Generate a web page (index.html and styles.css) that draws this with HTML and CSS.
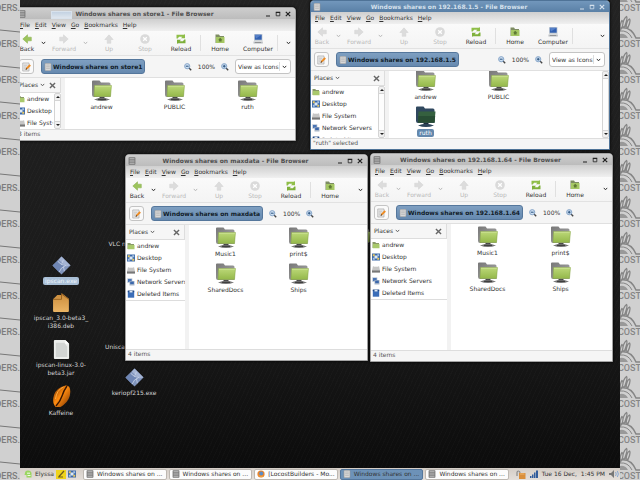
FILE: index.html
```html
<!DOCTYPE html>
<html lang="en">
<head>
<meta charset="utf-8">
<title>Desktop</title>
<link rel="stylesheet" href="styles.css">
</head>
<body>
<svg class="defs" aria-hidden="true">
  <defs>
    <linearGradient id="g-green" x1="0" y1="0" x2="0" y2="1"><stop offset="0" stop-color="#bcd878"/><stop offset="1" stop-color="#94b84a"/></linearGradient>
    <linearGradient id="g-gray" x1="0" y1="0" x2="1" y2="1"><stop offset="0" stop-color="#777"/><stop offset="1" stop-color="#aaa"/></linearGradient>
    <linearGradient id="g-bean" x1="0" y1="0" x2="1" y2="1"><stop offset="0" stop-color="#6a2800"/><stop offset=".45" stop-color="#ff8c10"/><stop offset="1" stop-color="#702c00"/></linearGradient>
    <linearGradient id="g-box" x1="0" y1="0" x2="0" y2="1"><stop offset="0" stop-color="#c88a3a"/><stop offset="1" stop-color="#eab464"/></linearGradient>
  </defs>
  <symbol id="share" viewBox="0 0 20 21"><path d="M0 1.500Q0 .5 1 .5h6.500l1.500 2h8q1.500 0 1.500 1.500v13H2q-2 0-2-2z" fill="url(#g-gray)"/><path d="M2.500 5.500H19.500L18.500 16.500H2z" fill="url(#g-green)" stroke="#86a544" stroke-width=".5"/><path d="M3 6.200h15.800" stroke="#d4e8a0" stroke-width=".7"/><path d="M7.500 17h5v1.500h-5z" fill="#444"/><path d="M2 19.500Q6 17.800 10 17.800t8 1.700Q14 21 10 21T2 19.500z" fill="#777"/><path d="M6 19.300h8" stroke="#333"/></symbol>
  <symbol id="share-dark" viewBox="0 0 20 21"><path d="M0 1.500Q0 .5 1 .5h6.500l1.500 2h8q1.500 0 1.500 1.500v13H2q-2 0-2-2z" fill="#30485f"/><path d="M2.500 5.500H19.500L18.500 16.500H2z" fill="#35603f"/><path d="M2.400 10h16.800l-.7 6.500H2z" fill="#284d34"/><path d="M7.500 17h5v1.500h-5z" fill="#182838"/><path d="M2 19.500Q6 17.800 10 17.800t8 1.700Q14 21 10 21T2 19.500z" fill="#2c445a"/></symbol>
  <symbol id="back" viewBox="0 0 10 10"><path d="M.8 5 5.500.8v2.400h3.800v3.600H5.500v2.400z" fill="#9cc45c" stroke="#8fb456" stroke-width=".6"/></symbol>
  <symbol id="arrow-off" viewBox="0 0 10 10"><path d="M.8 5 5.500.8v2.400h3.800v3.600H5.500v2.400z" fill="#dcdcdc" stroke="#d2d2d2" stroke-width=".5"/></symbol>
  <symbol id="stop" viewBox="0 0 10 10"><circle cx="5" cy="5" r="4.800" fill="#dadada"/><path d="m3.200 3.200 3.600 3.600m0-3.600L3.200 6.800" stroke="#fff" stroke-width="1.300"/></symbol>
  <symbol id="reload" viewBox="0 0 10 10"><path d="M.5.800h7l1.500-.6v4H5l1.300-1.400H3L1.800 4.500H.5z" fill="#8fbe48"/><path d="M9.500 9.200h-7l-1.500.6v-4h4L3.700 7.200H7l1.200-1.700h1.300z" fill="#7eb03a"/></symbol>
  <symbol id="home" viewBox="0 0 10 10"><path d="M.5.500h3.500l1 1.500H9v7H.5z" fill="#7d8c62"/><path d="M1 3h8.500v6H1z" fill="#a5c764"/><path d="m5.200 3.800-2 2h.7v1.700h2.700V5.800h.7z" fill="#5f7a35"/></symbol>
  <symbol id="computer" viewBox="0 0 10 10"><path d="M1 0h8.500v7H1z" fill="#ccd2d8"/><path d="M1.800.8h6.900v5H1.800z" fill="#3260b0"/><path d="M1.800.8h6.900L3 4.500z" fill="#5680c8"/><path d="M.5 7.500h9.300V9.500H.5z" fill="#b8bcc0"/><path d="M2 8.500h6" stroke="#777" stroke-width=".6"/></symbol>
  <symbol id="edit" viewBox="0 0 10 10"><path d="M.8.5h7v9h-7z" fill="#e8e8e8" stroke="#999" stroke-width=".6"/><path d="M2 3h4M2 5h3M2 7h2" stroke="#aaa" stroke-width=".6"/><path d="m4 8 .6-2.300L8.400 2l1.500 1.500-3.800 3.800z" fill="#ee8b22"/><path d="m4 8 .5-1.800 1.300 1.200z" fill="#333"/></symbol>
  <symbol id="drive" viewBox="0 0 8 8"><rect x="1" y=".3" width="6" height="7.400" rx=".8" fill="#d8d8d8" stroke="#999" stroke-width=".6"/><path d="M2.200 2h3.600M2.200 3.700h3.600M2.200 5.400h3.600" stroke="#aaa" stroke-width=".6"/></symbol>
  <symbol id="cabinet" viewBox="0 0 8 8"><rect x=".6" y=".3" width="6.800" height="7.400" rx=".6" fill="#777"/><path d="M1.500 1.800h5M1.500 4h5M1.500 6.200h5" stroke="#c4c4c4" stroke-width="1"/></symbol>
  <symbol id="zoom-out" viewBox="0 0 8 8"><path d="m4.800 4.800 2.400 2.400" stroke="#444" stroke-width="1.400"/><circle cx="3.200" cy="3.200" r="2.600" fill="#cfe0f2" stroke="#7f9fc4" stroke-width=".9"/><path d="M1.800 3.200h2.800" stroke="#26507e"/></symbol>
  <symbol id="zoom-in" viewBox="0 0 8 8"><path d="m4.800 4.800 2.400 2.400" stroke="#444" stroke-width="1.400"/><circle cx="3.200" cy="3.200" r="2.600" fill="#cfe0f2" stroke="#7f9fc4" stroke-width=".9"/><path d="M1.800 3.200h2.800M3.200 1.800v2.800" stroke="#26507e"/></symbol>
  <symbol id="folder" viewBox="0 0 8 8"><path d="M.5 1h2.800l.7 1H7v5H.5z" fill="#8a9a68"/><path d="M1 3h6.500v4.200H.8z" fill="#a9c96c"/></symbol>
  <symbol id="desk" viewBox="0 0 8 8"><path d="M0 .5h8v7H0z" fill="#3a68a8"/><path d="M.8 1.200h2v2h-2zM5.200 4.800h2v2h-2z" fill="#e8c860"/><path d="M5.200 1.200h2v2h-2zM.8 4.800h2v2h-2z" fill="#a8c4e4"/><path d="m4 2 2 2-2 2-2-2z" fill="#dce8f4"/></symbol>
  <symbol id="disk" viewBox="0 0 8 8"><path d="M1 1h6l1 4.500v2H0v-2z" fill="#c6c6c6"/><path d="M0 5.500h8v2H0z" fill="#777"/><path d="M1.500 1.500h5" stroke="#eee"/></symbol>
  <symbol id="net" viewBox="0 0 8 8"><path d="M.3.300h5v4.500h-5z" fill="#b8c4d4"/><path d="M1 1h3.600v3H1z" fill="#4a74b4"/><path d="M2.500 3h5v4.500h-5z" fill="#a8b6c8"/><path d="M3.200 3.600h3.600v2.500H3.200z" fill="#3c68ac"/></symbol>
  <symbol id="bin" viewBox="0 0 8 8"><path d="M.8 1h6.400v6.700H.8z" fill="#3a6db8"/><path d="M.8.5h6.400v1.700H.8z" fill="#234a86"/><path d="M2.500.8h3v1.700h-3z" fill="#dde8f4"/></symbol>
  <symbol id="chev" viewBox="0 0 5 4"><path d="m.8.900 1.700 1.900L4.200.9" fill="none" stroke="currentColor" stroke-width="1"/></symbol>
  <symbol id="x" viewBox="0 0 6 6"><path d="m.8.8 4.400 4.400m0-4.400L.8 5.200" stroke="currentColor" stroke-width="1.200"/></symbol>
  <symbol id="min" viewBox="0 0 6 6"><path d="M1 5h4" stroke="currentColor" stroke-width="1.200"/></symbol>
  <symbol id="max" viewBox="0 0 6 6"><path d="M1.200 1.500h3.600v3.300H1.200z" fill="none" stroke="currentColor" stroke-width=".8"/><path d="M.8 1.300h4.400" stroke="currentColor" stroke-width="1.200"/></symbol>
  <symbol id="diamond" viewBox="0 0 20 20"><path d="m10 .5 9.500 9.500-9.500 9.500L.5 10z" fill="#8094bc"/><path d="m10 .5 9.500 9.500-4.500 1L7 4z" fill="#a4b4d4"/><path d="M5.500 5.500q3 4 8.500 4.500-6 2-6.500 7L.5 10z" fill="#6f86b4"/><path d="M6 5.500q3.500 4.500 8.500 4.500-5.500 2-7 7M12 4l-2 5M13 16l-1-5" fill="none" stroke="#c4d0e6" stroke-width=".9"/></symbol>
  <symbol id="deb" viewBox="0 0 18 18"><path d="M1 6 5 2h4V0l7 5.500V17q0 1-1 1H2q-1 0-1-1z" fill="url(#g-box)"/><path d="M1 6h8V1l7 5" fill="none" stroke="#8f5b1c" stroke-width=".8"/></symbol>
  <symbol id="jar" viewBox="0 0 18 20"><path d="M1 1q0-1 1-1h11l4 4v15q0 1-1 1H2q-1 0-1-1z" fill="#eceeec"/><path d="M3 3h9l3 4v11H3z" fill="#d2d5d3"/><path d="m13 0 4 4h-4z" fill="#fff"/></symbol>
  <symbol id="bean" viewBox="0 0 18 22"><path d="M13 .5Q18 0 17.800 7 17.500 15 11 20T2 20.500Q-.5 17 1.500 10T13 .5z" fill="url(#g-bean)"/><path d="M14.500 1Q11 6 9.500 11T3.500 21" fill="none" stroke="#3a1600" stroke-width="1.400"/><path d="M11 2Q4 5 3 14" fill="none" stroke="#ffac40"/></symbol>
  <symbol id="plants" viewBox="0 0 20 36"><g fill="none" stroke="#858585"><path d="M0 16.500Q0 9 2 6.500q2 1 0 7zM2.500 13Q3 5 6.500 2.500 8 4 4.500 13zM6 13Q7 6 9.500 5 11 7 8 13.500z" stroke-width="1.300"/><path d="M0 14q11-2 16 10h4" stroke-width="1.500"/><path d="M0 17q8-1 12 7" /></g><path d="M0 20q5-1 8 4H0z" fill="#999"/></symbol>
  <symbol id="rule" viewBox="0 0 20 36"><path d="m0 30 20 2" stroke="#777" stroke-width="1"/></symbol>
</svg>

<div class="strip strip-left">
  <div class="tile"><svg><use href="#rule"/></svg><span>DERS.</span></div><div class="tile"><svg><use href="#rule"/></svg><span>DERS.</span></div><div class="tile"><svg><use href="#rule"/></svg><span>DERS.</span></div><div class="tile"><svg><use href="#rule"/></svg><span>DERS.</span></div><div class="tile"><svg><use href="#rule"/></svg><span>DERS.</span></div><div class="tile"><svg><use href="#rule"/></svg><span>DERS.</span></div><div class="tile"><svg><use href="#rule"/></svg><span>DERS.</span></div><div class="tile"><svg><use href="#rule"/></svg><span>DERS.</span></div><div class="tile"><svg><use href="#rule"/></svg><span>DERS.</span></div><div class="tile"><svg><use href="#rule"/></svg><span>DERS.</span></div><div class="tile"><svg><use href="#rule"/></svg><span>DERS.</span></div><div class="tile"><svg><use href="#rule"/></svg><span>DERS.</span></div><div class="tile"><svg><use href="#rule"/></svg><span>DERS.</span></div><div class="tile"><svg><use href="#rule"/></svg><span>DERS.</span></div>
</div>

<main class="screen">
  <div class="desktop">
    <div class="launcher ipscan selected"><svg class="i-launch"><use href="#diamond"/></svg><span>ipscan.exe</span></div>
    <div class="launcher deb"><svg class="i-launch"><use href="#deb"/></svg><span>ipscan_3.0-beta3_<br>i386.deb</span></div>
    <div class="launcher jar"><svg class="i-launch"><use href="#jar"/></svg><span>ipscan-linux-3.0-<br>beta3.jar</span></div>
    <div class="launcher kaffeine"><svg class="i-launch tall"><use href="#bean"/></svg><span>Kaffeine</span></div>
    <div class="launcher keriopf"><svg class="i-launch"><use href="#diamond"/></svg><span>keriopf215.exe</span></div>
    <div class="launcher vlc"><span>VLC media player</span></div>
    <div class="launcher uniscan"><span>Uniscan</span></div>
    <div class="launcher behind"><svg class="i-launch"><use href="#share"/></svg></div>

    <section class="window w-store">
      <header class="titlebar"><svg class="i8"><use href="#cabinet"/></svg><h2>Windows shares on store1 - File Browser</h2><button aria-label="Minimize"><svg><use href="#min"/></svg></button><button aria-label="Maximize"><svg><use href="#max"/></svg></button><button aria-label="Close"><svg><use href="#x"/></svg></button><i class="ghost"></i></header>
      <nav class="menubar"><button><u>F</u>ile</button><button><u>E</u>dit</button><button><u>V</u>iew</button><button><u>G</u>o</button><button><u>B</u>ookmarks</button><button><u>H</u>elp</button></nav>
      <div class="toolbar">
        <button class="t-back"><svg><use href="#back"/></svg>Back</button><button class="t-drop" aria-label="Back history"><svg><use href="#chev"/></svg></button>
        <button class="t-fwd" disabled><svg class="flip"><use href="#arrow-off"/></svg>Forward</button><button class="t-drop" disabled aria-label="Forward history"><svg><use href="#chev"/></svg></button>
        <button class="t-std" disabled><svg class="up"><use href="#arrow-off"/></svg>Up</button><button class="t-stop" disabled><svg><use href="#stop"/></svg>Stop</button><button class="t-std"><svg><use href="#reload"/></svg>Reload</button><i class="sep"></i>
        <button class="t-std"><svg><use href="#home"/></svg>Home</button><button class="t-std"><svg><use href="#computer"/></svg>Computer</button><i class="sep"></i><button class="t-drop more" aria-label="More"><svg><use href="#chev"/></svg></button>
      </div>
      <div class="location">
        <button class="edit" aria-label="Edit location"><svg><use href="#edit"/></svg></button><button class="path"><svg class="i8"><use href="#drive"/></svg>Windows shares on store1</button>
        <div class="zoom wide"><button aria-label="Zoom out"><svg class="i8"><use href="#zoom-out"/></svg></button><span>100%</span><button aria-label="Zoom in"><svg class="i8"><use href="#zoom-in"/></svg></button></div>
        <div class="view"><select aria-label="View"><option>View as Icons</option></select><svg><use href="#chev"/></svg></div>
      </div>
      <div class="body">
        <aside class="side">
          <div class="side-head"><button>Places <svg class="c5"><use href="#chev"/></svg></button><button class="close" aria-label="Close side pane"><svg><use href="#x"/></svg></button></div>
          <div class="side-scroll"><ul><li><a href="#"><svg class="i8"><use href="#folder"/></svg>andrew</a></li><li><a href="#"><svg class="i8"><use href="#desk"/></svg>Desktop</a></li><li><a href="#"><svg class="i8"><use href="#disk"/></svg>File Syst·</a></li></ul><div class="bar"><b class="tri up-tri"></b><b class="thumb"></b><b class="tri"></b></div></div>
        </aside>
        <div class="files"><div class="file"><svg><use href="#share"/></svg><span>andrew</span></div><div class="file"><svg><use href="#share"/></svg><span>PUBLIC</span></div><div class="file"><svg><use href="#share"/></svg><span>ruth</span></div></div>
      </div>
      <footer class="status">3 items</footer>
    </section>

    <section class="window w-five active">
      <header class="titlebar"><svg class="i8"><use href="#drive"/></svg><h2>Windows shares on 192.168.1.5 - File Browser</h2><button aria-label="Minimize"><svg><use href="#min"/></svg></button><button aria-label="Maximize"><svg><use href="#max"/></svg></button><button aria-label="Close"><svg><use href="#x"/></svg></button></header>
      <nav class="menubar"><button><u>F</u>ile</button><button><u>E</u>dit</button><button><u>V</u>iew</button><button><u>G</u>o</button><button><u>B</u>ookmarks</button><button><u>H</u>elp</button></nav>
      <div class="toolbar">
        <button class="t-back" disabled><svg><use href="#arrow-off"/></svg>Back</button><button class="t-drop" disabled aria-label="Back history"><svg><use href="#chev"/></svg></button>
        <button class="t-fwd" disabled><svg class="flip"><use href="#arrow-off"/></svg>Forward</button><button class="t-drop" disabled aria-label="Forward history"><svg><use href="#chev"/></svg></button>
        <button class="t-std" disabled><svg class="up"><use href="#arrow-off"/></svg>Up</button><button class="t-stop" disabled><svg><use href="#stop"/></svg>Stop</button><button class="t-std"><svg><use href="#reload"/></svg>Reload</button><i class="sep"></i>
        <button class="t-std"><svg><use href="#home"/></svg>Home</button><button class="t-std"><svg><use href="#computer"/></svg>Computer</button><i class="sep"></i><button class="t-drop more" aria-label="More"><svg><use href="#chev"/></svg></button>
      </div>
      <div class="location">
        <button class="edit" aria-label="Edit location"><svg><use href="#edit"/></svg></button><button class="path"><svg class="i8"><use href="#drive"/></svg>Windows shares on 192.168.1.5</button>
        <div class="zoom wide"><button aria-label="Zoom out"><svg class="i8"><use href="#zoom-out"/></svg></button><span>100%</span><button aria-label="Zoom in"><svg class="i8"><use href="#zoom-in"/></svg></button></div>
        <div class="view"><select aria-label="View"><option>View as Icons</option></select><svg><use href="#chev"/></svg></div>
      </div>
      <div class="body">
        <aside class="side">
          <div class="side-head"><button>Places <svg class="c5"><use href="#chev"/></svg></button><button class="close" aria-label="Close side pane"><svg><use href="#x"/></svg></button></div>
          <div class="side-scroll"><ul><li><a href="#"><svg class="i8"><use href="#folder"/></svg>andrew</a></li><li><a href="#"><svg class="i8"><use href="#desk"/></svg>Desktop</a></li><li><a href="#"><svg class="i8"><use href="#disk"/></svg>File System</a></li><li><a href="#"><svg class="i8"><use href="#net"/></svg>Network Servers</a></li><li><a href="#"><svg class="i8"><use href="#bin"/></svg>Deleted Items</a></li></ul><div class="bar"><b class="tri up-tri"></b><b class="thumb"></b><b class="tri"></b></div></div>
        </aside>
        <div class="files scrolled"><div class="file"><svg><use href="#share"/></svg><span>andrew</span></div><div class="file"><svg><use href="#share"/></svg><span>PUBLIC</span></div><div class="file picked"><svg><use href="#share-dark"/></svg><span>ruth</span></div></div>
        <div class="bar"><b class="tri up-tri"></b><b class="thumb"></b><b class="tri"></b></div>
      </div>
      <footer class="status">"ruth" selected</footer>
    </section>

    <section class="window w-maxdata">
      <header class="titlebar"><svg class="i8"><use href="#cabinet"/></svg><h2>Windows shares on maxdata - File Browser</h2><button aria-label="Minimize"><svg><use href="#min"/></svg></button><button aria-label="Maximize"><svg><use href="#max"/></svg></button><button aria-label="Close"><svg><use href="#x"/></svg></button></header>
      <nav class="menubar"><button><u>F</u>ile</button><button><u>E</u>dit</button><button><u>V</u>iew</button><button><u>G</u>o</button><button><u>B</u>ookmarks</button><button><u>H</u>elp</button></nav>
      <div class="toolbar">
        <button class="t-back"><svg><use href="#back"/></svg>Back</button><button class="t-drop" aria-label="Back history"><svg><use href="#chev"/></svg></button>
        <button class="t-fwd" disabled><svg class="flip"><use href="#arrow-off"/></svg>Forward</button><button class="t-drop" disabled aria-label="Forward history"><svg><use href="#chev"/></svg></button>
        <button class="t-std" disabled><svg class="up"><use href="#arrow-off"/></svg>Up</button><button class="t-stop" disabled><svg><use href="#stop"/></svg>Stop</button><button class="t-std"><svg><use href="#reload"/></svg>Reload</button><i class="sep"></i>
        <button class="t-std"><svg><use href="#home"/></svg>Home</button><button class="t-drop more" aria-label="More"><svg><use href="#chev"/></svg></button>
      </div>
      <div class="location">
        <button class="edit" aria-label="Edit location"><svg><use href="#edit"/></svg></button><button class="path"><svg class="i8"><use href="#drive"/></svg>Windows shares on maxdata</button>
        <div class="zoom"><button aria-label="Zoom out"><svg class="i8"><use href="#zoom-out"/></svg></button><span>100%</span><button aria-label="Zoom in"><svg class="i8"><use href="#zoom-in"/></svg></button></div>
      </div>
      <div class="body">
        <aside class="side">
          <div class="side-head"><button>Places <svg class="c5"><use href="#chev"/></svg></button><button class="close" aria-label="Close side pane"><svg><use href="#x"/></svg></button></div>
          <div class="side-scroll full"><ul><li><a href="#"><svg class="i8"><use href="#folder"/></svg>andrew</a></li><li><a href="#"><svg class="i8"><use href="#desk"/></svg>Desktop</a></li><li><a href="#"><svg class="i8"><use href="#disk"/></svg>File System</a></li><li><a href="#"><svg class="i8"><use href="#net"/></svg>Network Servers</a></li><li><a href="#"><svg class="i8"><use href="#bin"/></svg>Deleted Items</a></li></ul></div>
        </aside>
        <div class="files"><div class="file"><svg><use href="#share"/></svg><span>Music1</span></div><div class="file"><svg><use href="#share"/></svg><span>print$</span></div><div class="file"><svg><use href="#share"/></svg><span>SharedDocs</span></div><div class="file"><svg><use href="#share"/></svg><span>Ships</span></div></div>
      </div>
      <footer class="status">4 items</footer>
    </section>

    <section class="window w-sixtyfour">
      <header class="titlebar"><svg class="i8"><use href="#cabinet"/></svg><h2>Windows shares on 192.168.1.64 - File Browser</h2><button aria-label="Minimize"><svg><use href="#min"/></svg></button><button aria-label="Maximize"><svg><use href="#max"/></svg></button><button aria-label="Close"><svg><use href="#x"/></svg></button></header>
      <nav class="menubar"><button><u>F</u>ile</button><button><u>E</u>dit</button><button><u>V</u>iew</button><button><u>G</u>o</button><button><u>B</u>ookmarks</button><button><u>H</u>elp</button></nav>
      <div class="toolbar">
        <button class="t-back" disabled><svg><use href="#arrow-off"/></svg>Back</button><button class="t-drop" disabled aria-label="Back history"><svg><use href="#chev"/></svg></button>
        <button class="t-fwd" disabled><svg class="flip"><use href="#arrow-off"/></svg>Forward</button><button class="t-drop" disabled aria-label="Forward history"><svg><use href="#chev"/></svg></button>
        <button class="t-std" disabled><svg class="up"><use href="#arrow-off"/></svg>Up</button><button class="t-stop" disabled><svg><use href="#stop"/></svg>Stop</button><button class="t-std"><svg><use href="#reload"/></svg>Reload</button><i class="sep"></i>
        <button class="t-std"><svg><use href="#home"/></svg>Home</button><button class="t-drop more" aria-label="More"><svg><use href="#chev"/></svg></button>
      </div>
      <div class="location">
        <button class="edit" aria-label="Edit location"><svg><use href="#edit"/></svg></button><button class="path"><svg class="i8"><use href="#drive"/></svg>Windows shares on 192.168.1.64</button>
        <div class="zoom"><button aria-label="Zoom out"><svg class="i8"><use href="#zoom-out"/></svg></button><span>100%</span><button aria-label="Zoom in"><svg class="i8"><use href="#zoom-in"/></svg></button></div>
      </div>
      <div class="body">
        <aside class="side">
          <div class="side-head"><button>Places <svg class="c5"><use href="#chev"/></svg></button><button class="close" aria-label="Close side pane"><svg><use href="#x"/></svg></button></div>
          <div class="side-scroll full"><ul><li><a href="#"><svg class="i8"><use href="#folder"/></svg>andrew</a></li><li><a href="#"><svg class="i8"><use href="#desk"/></svg>Desktop</a></li><li><a href="#"><svg class="i8"><use href="#disk"/></svg>File System</a></li><li><a href="#"><svg class="i8"><use href="#net"/></svg>Network Servers</a></li><li><a href="#"><svg class="i8"><use href="#bin"/></svg>Deleted Items</a></li></ul></div>
        </aside>
        <div class="files"><div class="file"><svg><use href="#share"/></svg><span>Music1</span></div><div class="file"><svg><use href="#share"/></svg><span>print$</span></div><div class="file"><svg><use href="#share"/></svg><span>SharedDocs</span></div><div class="file"><svg><use href="#share"/></svg><span>Ships</span></div></div>
      </div>
      <footer class="status">4 items</footer>
    </section>
  </div>

  <footer class="taskbar">
    <div class="start">
      <button class="user"><svg class="i8" viewBox="0 0 8 8"><path d="M1 3q0-2.500 3-2.500T7.500 3v4.500H2.500V5H.5z" fill="#9bd660"/><path d="M3 3.200h3M3.500 5.500h3" stroke="#f4fbe8"/></svg>Elyssa</button>
      <svg class="note" viewBox="0 0 10 9"><path d="M0 0h10v9H0z" fill="#efd31c"/><path d="m3 6.500 5-5.500M2 7h5" stroke="#6c5c20" stroke-width="1.200"/></svg>
      <svg class="i8"><use href="#desk"/></svg>
    </div>
    <nav class="tasks">
      <button><svg class="i8"><use href="#cabinet"/></svg>Windows shares on ...</button>
      <button><svg class="i8"><use href="#cabinet"/></svg>Windows shares on ...</button>
      <button><svg class="i8" viewBox="0 0 8 8"><circle cx="4" cy="4" r="3.600" fill="#e8842c"/><circle cx="4.200" cy="3.400" r="2" fill="#5a8cc8"/><path d="M.5 4q2 2.500 5 1.500L7 6Q3 9 .5 4z" fill="#f0a040"/></svg>[LocostBuilders - Mo...</button>
      <button class="current"><svg class="i8"><use href="#drive"/></svg>Windows shares on ...</button>
      <button><svg class="i8"><use href="#cabinet"/></svg>Windows shares on ...</button>
    </nav>
    <div class="tray">
      <svg class="lock" viewBox="0 0 10 9"><path d="M3 3h6.500v6H3z" fill="#d98f3c"/><path d="M1 6V2.500Q1 1 2.500 1T4 3" fill="none" stroke="#888" stroke-width="1.200"/><path d="M4 4h4.500" stroke="#efb468"/></svg>
      <svg class="i8" viewBox="0 0 8 8"><path d="M0 6h1.500v2H0zM2 4.500h1.500V8H2zM4 2.500h1.500V8H4zM6 .5h2V8H6z" fill="#315c9c"/></svg>
      <time>Tue 16 Dec,&nbsp; 1:45 PM</time>
      <svg class="speaker" viewBox="0 0 11 8"><path d="M0 3h2l3-3v8L2 5H0z" fill="#777"/><path d="M6.500 2q1.500 2 0 4M8.300 1q2.200 3 0 6" fill="none" stroke="#7fa4d4" stroke-width=".9"/></svg>
    </div>
  </footer>
</main>

<div class="strip strip-right">
  <div class="tile"><svg><use href="#plants"/></svg><span>COST</span></div><div class="tile"><svg><use href="#plants"/></svg><span>COST</span></div><div class="tile"><svg><use href="#plants"/></svg><span>COST</span></div><div class="tile"><svg><use href="#plants"/></svg><span>COST</span></div><div class="tile"><svg><use href="#plants"/></svg><span>COST</span></div><div class="tile"><svg><use href="#plants"/></svg><span>COST</span></div><div class="tile"><svg><use href="#plants"/></svg><span>COST</span></div><div class="tile"><svg><use href="#plants"/></svg><span>COST</span></div><div class="tile"><svg><use href="#plants"/></svg><span>COST</span></div><div class="tile"><svg><use href="#plants"/></svg><span>COST</span></div><div class="tile"><svg><use href="#plants"/></svg><span>COST</span></div><div class="tile"><svg><use href="#plants"/></svg><span>COST</span></div><div class="tile"><svg><use href="#plants"/></svg><span>COST</span></div><div class="tile"><svg><use href="#plants"/></svg><span>COST</span></div>
</div>
</body>
</html>
```
FILE: styles.css
```css
* { box-sizing: border-box; }

body {
  margin: 0;
  height: 100vh;
  display: flex;
  overflow: hidden;
  font: 6px/8px "DejaVu Sans", sans-serif;
  color: #333;
}

button, select {
  font: inherit;
  color: inherit;
  background: none;
  border: 0;
  padding: 0;
  margin: 0;
}

a { color: inherit; text-decoration: none; }
svg { display: block; flex: none; }
.defs { position: absolute; width: 0; height: 0; }
.i8 { width: 8px; height: 8px; }
.c5 { width: 5px; height: 4px; display: inline-block; }

/* Patterned margins */
.strip {
  width: 20px;
  flex: none;
  overflow: hidden;
  background: #d0d0d0;
  color: #7c7c7c;
  font: 500 9px/12px Roboto, "Liberation Sans", sans-serif;
}
.tile { position: relative; height: 36px; overflow: hidden; }
.tile svg { width: 20px; height: 36px; }
.tile span { position: absolute; right: 0; }
.strip-left .tile span { top: 2px; }
.strip-right { margin-top: -22px; color: #858585; }
.strip-right .tile span { top: 24px; right: -1px; }

/* Screen */
.screen { flex: 1; min-width: 0; display: flex; flex-direction: column; }
.desktop {
  position: relative;
  flex: 1;
  overflow: hidden;
  background:
    repeating-linear-gradient(115deg, rgba(255,255,255,.015) 0 1px, transparent 1px 4px),
    linear-gradient(#232323, #191919 70%, #0c0c0c);
}

.launcher {
  position: absolute;
  width: 72px;
  display: flex;
  flex-direction: column;
  align-items: center;
  gap: 2px;
  text-align: center;
  color: #d4d4d4;
}
.launcher span { padding: 0 2px; border-radius: 2px; white-space: nowrap; }
.i-launch { width: 19px; height: 19px; }
.i-launch.tall { height: 22px; }
.selected span { background: #a9bfd6; color: #eef4fa; }
.ipscan { left: 5px; top: 256px; }
.deb { left: 5px; top: 293px; }
.jar { left: 5px; top: 340px; }
.kaffeine { left: 5px; top: 385px; }
.keriopf { left: 78px; top: 368px; }
.vlc { left: 79px; top: 240px; }
.uniscan { left: 83px; top: 343px; align-items: flex-start; }
.behind { left: 305px; top: 227px; }

/* Windows */
.window {
  position: absolute;
  display: flex;
  flex-direction: column;
  border: 1px solid #a4a4a4;
  border-radius: 4px 4px 0 0;
  background: #f5f5f5;
  overflow: hidden;
  box-shadow: 0 0 3px #000;
}
.w-store { left: -5px; top: 7px; width: 281px; height: 134px; --side: 45px; }
.w-five { left: 290px; top: 0; width: 300px; height: 150px; --side: 74px; }
.w-maxdata { left: 105px; top: 154px; width: 243px; height: 207px; --side: 59px; }
.w-sixtyfour { left: 350px; top: 153px; width: 243px; height: 209px; --side: 76px; }
.active { border-color: #4f7397; }

.titlebar {
  position: relative;
  height: 11px;
  flex: none;
  display: flex;
  align-items: center;
  padding: 0 2px;
  background: linear-gradient(#cdcdcd, #bcbcbc);
  color: #505050;
}
.titlebar h2 { flex: 1; margin: 0; font: inherit; font-weight: bold; text-align: center; white-space: nowrap; }
.titlebar button { width: 10px; display: flex; justify-content: center; color: #222; }
.titlebar button svg { width: 6px; height: 6px; }
.active .titlebar { background: linear-gradient(#7297bc, #5a80a6); color: #d4e0ec; }
.active .titlebar button { color: #d4e0ec; }
.ghost {
  position: absolute;
  left: 35px;
  top: 3px;
  width: 21px;
  height: 8px;
  background: linear-gradient(#c3d2e2, #dfe6ee);
  border: 1px solid #d8e2ec;
}

.menubar {
  height: 12px;
  flex: none;
  display: flex;
  gap: 5px;
  padding-left: 4px;
  background: linear-gradient(#cfcfcf, #f0f0f0);
}

.toolbar {
  height: 25px;
  flex: none;
  display: flex;
  align-items: center;
  background: linear-gradient(#fafafa, #f4f4f4);
  border-bottom: 1px solid #e2e2e2;
}
.toolbar button { display: flex; flex-direction: column; align-items: center; gap: 1px; flex: none; }
.toolbar button:disabled { color: #b9b9b9; }
.toolbar svg { width: 10px; height: 10px; }
.toolbar .flip { transform: scaleX(-1); }
.toolbar .up { transform: rotate(90deg); }
.toolbar .t-back { width: 22px; }
.toolbar .t-fwd { width: 32px; }
.toolbar .t-stop { width: 34px; }
.toolbar .t-std { width: 38px; }
.toolbar .t-drop { width: 10px; }
.toolbar .t-drop svg { width: 5px; height: 4px; }
.toolbar .more { width: 14px; margin-left: auto; }
.sep { width: 1px; height: 16px; background: #e0e0e0; flex: none; }

.location { height: 21px; flex: none; display: flex; align-items: center; padding: 0 4px 0 3px; }
.edit { width: 15px; height: 15px; display: grid; place-items: center; border: 1px solid #c4c4c4; border-radius: 3px; background: #fafafa; }
.edit svg { width: 9px; height: 10px; }
.path {
  height: 15px;
  margin-left: 7px;
  padding: 0 2px;
  display: flex;
  align-items: center;
  gap: 1px;
  font-weight: bold;
  white-space: nowrap;
  color: #111c28;
  background: linear-gradient(#7e9fc1, #6689af);
  border: 1px solid #55779c;
  border-radius: 3px;
}
.zoom { display: flex; align-items: center; gap: 6px; margin-left: 6px; }
.zoom.wide { margin-left: auto; }
.view { position: relative; width: 56px; height: 15px; margin-left: 6px; border: 1px solid #c4c4c4; border-radius: 3px; background: #fff; }
.view select { appearance: none; width: 100%; height: 100%; padding-left: 2px; display: block; }
.view svg { position: absolute; right: 3px; top: 5px; width: 5px; height: 4px; }
.view::after { content: ""; position: absolute; right: 10px; top: 2px; bottom: 2px; width: 1px; background: #ddd; }

.body { flex: 1; min-height: 0; display: flex; border-top: 1px solid #e0e0e0; }
.side { width: var(--side); flex: none; display: flex; flex-direction: column; background: #fff; overflow: hidden; }
.side-head {
  height: 15px;
  flex: none;
  display: flex;
  align-items: center;
  justify-content: space-between;
  padding: 0 4px 0 3px;
  background: #f6f6f6;
  border-right: 1px solid #ddd;
  border-bottom: 1px solid #ddd;
}
.side-head svg { color: #666; }
.close svg { width: 7px; height: 7px; }
.side-scroll { flex: 1; min-height: 0; display: flex; overflow: hidden; }
.side ul { flex: 1; min-width: 0; list-style: none; margin: 0; padding: 0; overflow: hidden; }
.side li a { height: 12px; display: flex; align-items: center; gap: 2px; padding-left: 1px; white-space: nowrap; }
.full ul { align-self: flex-start; border-bottom: 1px solid #ddd; }

.bar { width: 7px; flex: none; display: flex; flex-direction: column; align-items: center; justify-content: space-between; background: #f0f0f0; border: 1px solid #d4d4d4; border-radius: 2px; }
.tri { margin: 2px 0; border: 2px solid transparent; border-top-color: #222; border-bottom: 0; }
.up-tri { border: 2px solid transparent; border-bottom-color: #222; border-top: 0; }
.thumb { flex: 1; width: 100%; background: #fdfdfd; border: solid #d4d4d4; border-width: 1px 0; }

.files {
  flex: 1;
  display: grid;
  grid-template-columns: repeat(auto-fill, 73px);
  grid-auto-rows: 36px;
  align-content: start;
  padding-top: 2px;
  background: #fff;
  border-left: 4px solid #f2f2f2;
  overflow: hidden;
}
.files.scrolled { padding-top: 0; }
.scrolled .file svg { margin-top: -1px; }
.file { display: flex; flex-direction: column; align-items: center; gap: 2px; }
.file svg { width: 20px; height: 21px; }
.file span { padding: 0 2px; border-radius: 2px; }
.picked span { background: #6488ad; color: #fff; }

.status { height: 11px; flex: none; padding-left: 2px; border-top: 1px solid #ddd; color: #555; }

/* Taskbar */
.taskbar {
  height: 12px;
  flex: none;
  display: flex;
  align-items: center;
  background: linear-gradient(#d4cdc6, #e4dfda);
  white-space: nowrap;
}
.start { width: 63px; flex: none; display: flex; align-items: center; gap: 2px; padding-left: 4px; }
.user { display: flex; align-items: center; gap: 3px; }
.note { width: 10px; height: 9px; }
.tasks { flex: 1; min-width: 0; display: flex; gap: 2px; }
.tasks button {
  flex: 1;
  min-width: 0;
  height: 11px;
  display: flex;
  align-items: center;
  gap: 3px;
  padding-left: 2px;
  overflow: hidden;
  border: 1px solid #bdb8b2;
  border-radius: 2px;
  background: #fcfcfc;
}
.tasks .current { background: #6d92b8; border-color: #55779c; }
.tray { flex: none; width: 111px; display: flex; align-items: center; justify-content: flex-end; gap: 4px; }
.lock { width: 10px; height: 9px; }
.speaker { width: 11px; height: 8px; }
```
